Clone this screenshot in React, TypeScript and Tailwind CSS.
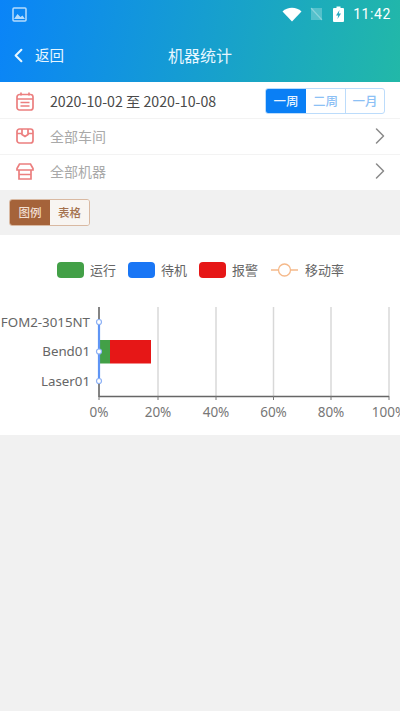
import { ChevronLeft, ChevronRight } from 'lucide-react';

const font = { fontFamily: '"Noto Sans CJK SC", "Noto Sans", sans-serif' };

function CalendarIcon() {
  return (
    <svg width="18" height="19" viewBox="0 0 18 19" fill="none" stroke="#ec7f7f" strokeWidth="1.700">
      <rect x="1" y="2.500" width="16" height="15.500" rx="2.500" />
      <path d="M5 0.500v3M13 0.500v3M1 7h16M4.500 10.500h9M4.500 14h9" />
    </svg>
  );
}

function BoxIcon() {
  return (
    <svg width="18" height="16" viewBox="0 0 18 16" fill="none" stroke="#ec7f7f" strokeWidth="1.700">
      <rect x="1" y="1" width="16" height="14" rx="2.500" />
      <path d="M1 5.500h5M12 5.500h5M6 1v5.500L9 8.500l3-2V1" />
    </svg>
  );
}

function ShopIcon() {
  return (
    <svg width="18" height="17" viewBox="0 0 18 17" fill="none" stroke="#ec7f7f" strokeWidth="1.700">
      <path d="M3.500 1h11L17 5.500v1.500H1V5.500z" />
      <path d="M3 7v9h12V7M3 11.500h12" />
    </svg>
  );
}

function StatusBar() {
  return (
    <div className="flex h-7 items-center justify-between pl-3 pr-[9px] text-white">
      <svg width="15" height="15" viewBox="0 0 15 15" className="opacity-80">
        <rect x="1" y="1" width="13" height="13" rx="1" fill="none" stroke="#dff1ff" strokeWidth="1.500" />
        <path d="M2 12l3.500-5 3 3 2-1.500L13 12z" fill="#dff1ff" />
      </svg>
      <div className="flex items-center">
        <svg width="20" height="15" viewBox="0 0 20 15">
          <path d="M0.500 4.500C5.500-0.500 14.500-0.500 19.500 4.500L10 14.500z" fill="#ffffff" />
        </svg>
        <svg width="13" height="14" viewBox="0 0 13 14" className="ml-[8px]">
          <path d="M1 1h11v12H1z" fill="#ffffff" opacity="0.25" />
          <path d="M1 1l11 12" stroke="#ffffff" strokeWidth="1.200" opacity="0.3" />
        </svg>
        <svg width="11" height="16" viewBox="0 0 11 16" className="ml-[10px]">
          <path d="M3.500 0.500h4v1.500H10a1 1 0 0 1 1 1V15a1 1 0 0 1-1 1H1a1 1 0 0 1-1-1V3a1 1 0 0 1 1-1h2.500z" fill="#ffffff" />
          <path d="M6.500 4L3 9.500h2.200L4.500 13 8 7.500H5.800z" fill="#26a9c0" />
        </svg>
        <span className="ml-[9px] text-[14px] leading-none tracking-[0.6px]" style={{ fontFamily: 'Roboto, sans-serif' }}>
          11:42
        </span>
      </div>
    </div>
  );
}

function FilterRow({ icon, label, nudge }: { icon: React.ReactNode; label: string; nudge: string }) {
  return (
    <div className={`flex h-9 items-center border-t border-[#f3f3f3] pl-4 pr-[6px] ${nudge}`}>
      <div className="flex w-[18px] justify-center">{icon}</div>
      <span className="ml-4 flex-1 text-[14px] leading-none text-[#a9a9a9]">{label}</span>
      <ChevronRight size={28} strokeWidth={1.300} color="#8b8b8b" />
    </div>
  );
}

function LegendBox({ color, label }: { color: string; label: string }) {
  return (
    <div className="flex items-center gap-[6px]">
      <span className={`h-4 w-[27px] rounded-[4px] ${color}`} />
      <span className="pb-[2px] text-[13px] leading-none text-[#666666]">{label}</span>
    </div>
  );
}

function Chart() {
  const gridX = [158, 216, 273.500, 331, 389];
  const ticks = ['0%', '20%', '40%', '60%', '80%', '100%'];
  const allX = [99, ...gridX];
  const rows = [
    { name: 'FOM2-3015NT', y: 22 },
    { name: 'Bend01', y: 51.500 },
    { name: 'Laser01', y: 81 },
  ];

  return (
    <svg width="400" height="135" viewBox="0 0 400 135" className="block">
      {gridX.map((x) => (
        <line key={x} x1={x} y1="7" x2={x} y2="96" stroke="#d8d8d8" strokeWidth="1.500" />
      ))}
      <line x1="99" y1="7" x2="99" y2="97" stroke="#777777" strokeWidth="1.800" />
      <line x1="99" y1="96.500" x2="389" y2="96.500" stroke="#666666" strokeWidth="1.300" />
      {allX.map((x) => (
        <line key={x} x1={x} y1="96" x2={x} y2="100" stroke="#777777" />
      ))}
      <rect x="99" y="40" width="11" height="23.500" fill="#43a047" />
      <rect x="110" y="40" width="41" height="23.500" fill="#e61717" />
      <line x1="99" y1="22" x2="99" y2="81" stroke="#5f95f5" strokeWidth="2.200" />
      {rows.map((r) => (
        <g key={r.name}>
          <circle cx="99" cy={r.y} r="2.500" fill="#ffffff" stroke="#8eb2f5" strokeWidth="1.200" />
          <text x="90" y={r.y + 4.500} textAnchor="end" fontSize="13.300" fill="#666666" style={{ fontFamily: '"Noto Sans", sans-serif' }}>
            {r.name}
          </text>
        </g>
      ))}
      {ticks.map((t, i) => (
        <text key={t} x={allX[i]} y="117" textAnchor="middle" fontSize="13.500" fill="#777777" style={{ fontFamily: '"Noto Sans", sans-serif' }}>
          {t}
        </text>
      ))}
    </svg>
  );
}

export default function App() {
  return (
    <div className="flex h-[711px] w-[400px] flex-col overflow-hidden bg-[#f1f1f1]" style={font}>
      <div className="h-[82px] bg-linear-[100deg] from-[#0a84f8] to-[#22b8a8]">
        <StatusBar />
        <div className="relative flex h-[54px] items-center pl-[7px] text-[#e6f6ff]">
          <ChevronLeft size={23} strokeWidth={2.200} />
          <span className="ml-[5px] text-[14.500px] leading-none">返回</span>
          <span className="absolute inset-x-0 text-center text-[16px] leading-none">机器统计</span>
        </div>
      </div>

      <div className="bg-white">
        <div className="flex h-9 items-center pl-4 pr-[15px] pt-[2px]">
          <div className="flex w-[18px] justify-center"><CalendarIcon /></div>
          <span className="ml-4 flex-1 whitespace-nowrap text-[14.200px] leading-none text-[#4a4a4a]">2020-10-02 至 2020-10-08</span>
          <div className="flex h-[26px] w-[120px] overflow-hidden rounded-[3px] border border-[#bcdcfb] text-[12.500px] font-medium leading-none">
            <span className="flex w-10 items-center justify-center bg-[#0a7ff5] text-[#e8f3ff]">一周</span>
            <span className="flex w-10 items-center justify-center border-r border-[#bcdcfb] text-[#8cc0f5]">二周</span>
            <span className="flex flex-1 items-center justify-center text-[#8cc0f5]">一月</span>
          </div>
        </div>
        <FilterRow icon={<BoxIcon />} label="全部车间" nudge="pb-[1px]" />
        <FilterRow icon={<ShopIcon />} label="全部机器" nudge="pb-[3px]" />
      </div>

      <div className="flex h-[45px] items-center pl-[9px]">
        <div className="flex h-[27px] w-[81px] overflow-hidden rounded-[3px] border border-[#d9b9a2] text-[11.500px] font-medium leading-none">
          <span className="flex w-10 items-center justify-center bg-[#a5633a] text-[#f2dfd2]">图例</span>
          <span className="flex flex-1 items-center justify-center bg-[#f8f5f2] text-[#a5724f]">表格</span>
        </div>
      </div>

      <div className="h-[200px] bg-white">
        <div className="flex h-[65px] items-center pl-[57px] pt-[5px]">
          <LegendBox color="bg-[#43a047]" label="运行" />
          <div className="ml-[12px]"><LegendBox color="bg-[#1976f5]" label="待机" /></div>
          <div className="ml-[12px]"><LegendBox color="bg-[#e61717]" label="报警" /></div>
          <div className="ml-[13px] flex items-center gap-[7px]">
            <svg width="27" height="16" viewBox="0 0 27 16" fill="none" stroke="#f5b98a" strokeWidth="1.300">
              <path d="M0 8h7.500M19.500 8H27" />
              <circle cx="13.500" cy="8" r="6" fill="#ffffff" />
            </svg>
            <span className="pb-[2px] text-[13px] leading-none text-[#666666]">移动率</span>
          </div>
        </div>
        <Chart />
      </div>
    </div>
  );
}
